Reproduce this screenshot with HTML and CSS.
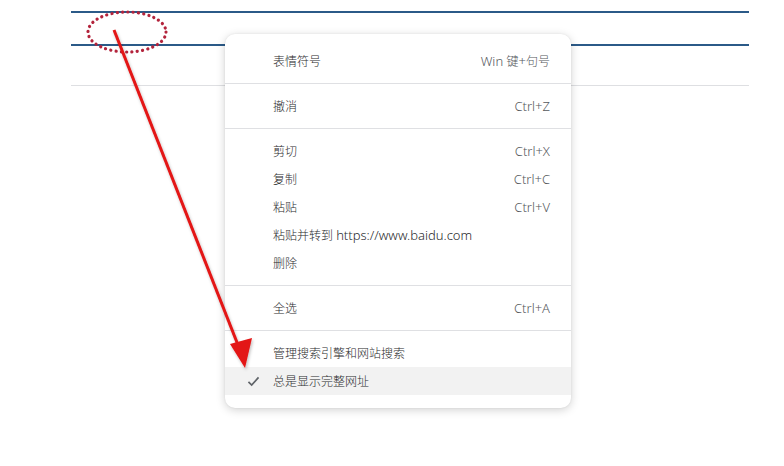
FILE: index.html
```html
<!DOCTYPE html>
<html lang="zh-CN">
<head>
<meta charset="utf-8">
<link rel="stylesheet" href="styles.css">
</head>
<body>
<div class="page">
  <div class="rule rule-top"></div>
  <div class="rule rule-mid"></div>
  <div class="rule rule-light"></div>
</div>

<div class="menu">
  <div class="item"><span class="label">表情符号</span><span class="key">Win <span class="cjk">键</span>+<span class="cjk">句号</span></span></div>
  <div class="sep"></div>
  <div class="item"><span class="label">撤消</span><span class="key">Ctrl+Z</span></div>
  <div class="sep"></div>
  <div class="item"><span class="label">剪切</span><span class="key">Ctrl+X</span></div>
  <div class="item"><span class="label">复制</span><span class="key">Ctrl+C</span></div>
  <div class="item"><span class="label">粘贴</span><span class="key">Ctrl+V</span></div>
  <div class="item"><span class="label">粘贴并转到 <span class="lat">https://www.baidu.com</span></span></div>
  <div class="item"><span class="label">删除</span></div>
  <div class="sep"></div>
  <div class="item"><span class="label">全选</span><span class="key">Ctrl+A</span></div>
  <div class="sep"></div>
  <div class="item"><span class="label">管理搜索引擎和网站搜索</span></div>
  <div class="item item-active">
    <svg class="check" viewBox="0 0 14 12" width="13" height="11"><path d="M1.5 6.5 L5 10 L12.5 1.5" fill="none" stroke="#5f6368" stroke-width="1.8"/></svg>
    <span class="label">总是显示完整网址</span>
  </div>
</div>

<svg class="annot" width="784" height="466" viewBox="0 0 784 466">
  <defs>
    <filter id="sh" x="-20%" y="-20%" width="140%" height="140%">
      <feDropShadow dx="1" dy="2" stdDeviation="1.5" flood-color="#000" flood-opacity="0.25"/>
    </filter>
  </defs>
  <ellipse cx="127" cy="32" rx="39" ry="20" fill="none" stroke="#b3243c" stroke-width="3.2" stroke-dasharray="0.1 5.2" stroke-linecap="round"/>
  <g filter="url(#sh)">
    <line x1="114" y1="30" x2="238" y2="345" stroke="#e31414" stroke-width="3"/>
    <polygon points="245,368 230,344 252,338" fill="#e31414"/>
  </g>
</svg>
</body>
</html>
```
FILE: styles.css
```css
html, body {
  margin: 0;
  padding: 0;
  background: #ffffff;
}
body {
  width: 784px;
  height: 466px;
  overflow: hidden;
  position: relative;
  font-family: "Noto Sans", "Noto Sans CJK SC", sans-serif;
}
.page {
  padding: 11px 0 0 71px;
  width: 678px;
}
.rule {
  width: 678px;
}
.rule-top {
  height: 2px;
  background: #2b5a88;
}
.rule-mid {
  height: 2px;
  margin-top: 31px;
  background: #2b5a88;
}
.rule-light {
  height: 1px;
  margin-top: 39px;
  background: #dedfe2;
}
.menu {
  position: absolute;
  left: 225px;
  top: 34px;
  width: 346px;
  padding: 13px 0;
  background: #ffffff;
  border-radius: 10px;
  box-shadow: 0 2px 10px rgba(0, 0, 0, 0.18), 0 0 2px rgba(0, 0, 0, 0.08);
  font-size: 12px;
  color: #333333;
}
.item {
  height: 28px;
  display: flex;
  align-items: center;
  padding: 0 21px 0 48px;
  position: relative;
}
.label {
  flex: 1;
  font-weight: 300;
  color: #2a2b2d;
}
.lat {
  font-size: 13px;
  font-weight: 300;
}
.key {
  font-size: 13px;
  font-weight: 300;
  color: #55585c;
}
.cjk {
  font-size: 12px;
}
.sep {
  height: 1px;
  margin: 8px 0;
  background: #dfe0e3;
}
.item-active {
  background: #f2f2f2;
}
.check {
  position: absolute;
  left: 22px;
  top: 9px;
}
.annot {
  position: absolute;
  left: 0;
  top: 0;
  pointer-events: none;
}
```
